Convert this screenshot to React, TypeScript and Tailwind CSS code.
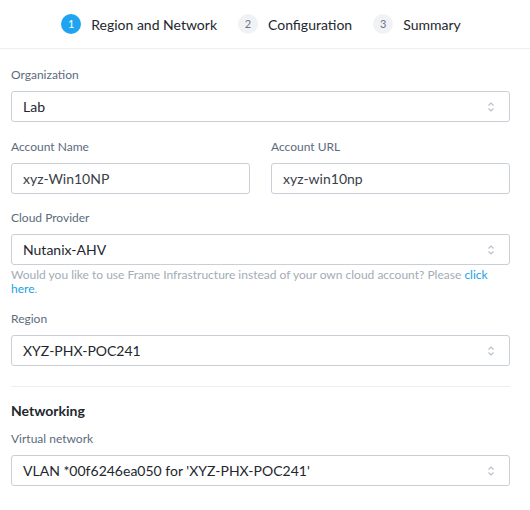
import React from "react";

const Arrows = () => (
  <svg width="8" height="12" viewBox="0 0 8 12" className="text-[#b9c0c9]">
    <path d="M1.5 4.5 L4 2 L6.5 4.5" fill="none" stroke="currentColor" strokeWidth="1.2" />
    <path d="M1.5 7.5 L4 10 L6.5 7.5" fill="none" stroke="currentColor" strokeWidth="1.2" />
  </svg>
);

const Label = ({ children }: { children: React.ReactNode }) => (
  <div className="mb-[8px] text-[12px] leading-[16px] text-[#5c6b7e]">{children}</div>
);

const Select = ({ value }: { value: string }) => (
  <div className="flex h-[31px] items-center justify-between rounded-[3px] border border-[#c9cfd7] pl-[11px] pr-[14px] text-[14px] text-[#22272e]">
    <span>{value}</span>
    <Arrows />
  </div>
);

const Input = ({ value }: { value: string }) => (
  <div className="flex h-[31px] items-center rounded-[3px] border border-[#c9cfd7] px-[11px] text-[14px] text-[#3a4048]">
    {value}
  </div>
);

const Step = ({ n, label, active }: { n: number; label: string; active?: boolean }) => (
  <div className="flex items-center gap-[10px]">
    <div
      className={
        active
          ? "flex h-[20px] w-[20px] items-center justify-center rounded-full bg-[#1fa5ef] text-[11px] text-white"
          : "flex h-[20px] w-[20px] items-center justify-center rounded-full bg-[#f1f2f5] text-[11px] text-[#6b7685]"
      }
    >
      {n}
    </div>
    <span className="text-[14px] text-[#22272e]">{label}</span>
  </div>
);

export default function App() {
  return (
    <div className="h-[510px] w-[530px] bg-white font-['Lato','Liberation_Sans',sans-serif]">
      <div className="flex h-[49px] items-center justify-center gap-[21px] border-b border-[#eceef1] pr-[8px]">
        <Step n={1} label="Region and Network" active />
        <Step n={2} label="Configuration" />
        <Step n={3} label="Summary" />
      </div>
      <div className="pl-[11px] pr-[20px] pt-[18px]">
        <Label>Organization</Label>
        <Select value="Lab" />

        <div className="mt-[17px] grid grid-cols-2 gap-[21px]">
          <div>
            <Label>Account Name</Label>
            <Input value="xyz-Win10NP" />
          </div>
          <div>
            <Label>Account URL</Label>
            <Input value="xyz-win10np" />
          </div>
        </div>

        <div className="mt-[16px]">
          <Label>Cloud Provider</Label>
          <Select value="Nutanix-AHV" />
          <p className="mt-[3px] text-[12px] leading-[14px] text-[#a3acb7]">
            Would you like to use Frame Infrastructure instead of your own cloud account? Please{" "}
            <span className="text-[#1a9fe6]">click here</span>.
          </p>
        </div>

        <div className="mt-[15px]">
          <Label>Region</Label>
          <Select value="XYZ-PHX-POC241" />
        </div>

        <div className="mt-[20px] border-t border-[#eceef1]" />

        <div className="mt-[14px] text-[14px] font-bold leading-[20px] text-[#22272e]">Networking</div>
        <div className="mt-[10px]">
          <Label>Virtual network</Label>
          <Select value="VLAN *00f6246ea050 for 'XYZ-PHX-POC241'" />
        </div>
      </div>
    </div>
  );
}
